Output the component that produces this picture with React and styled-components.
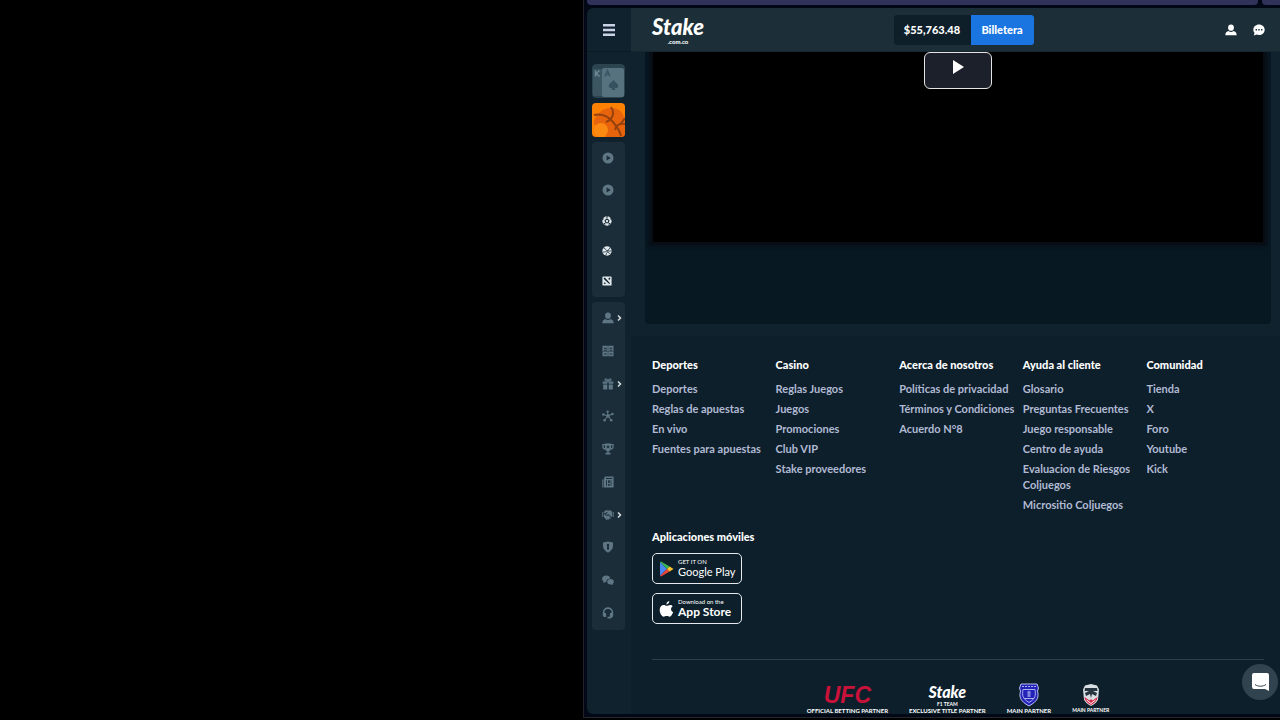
import React from "react";
import styled, { createGlobalStyle, css } from "styled-components";

const GlobalStyle = createGlobalStyle`
  * { box-sizing: border-box; }
  body {
    margin: 0;
    background: #000;
    font-family: Lato, "Liberation Sans", sans-serif;
    font-size: 11px;
    line-height: 16px;
    color: #fff;
  }
  button { font: inherit; color: inherit; border: 0; padding: 0; background: none; cursor: pointer; }
  a { color: inherit; text-decoration: none; }
  ul { list-style: none; margin: 0; padding: 0; }
  svg { display: block; flex: none; }
`;

const Page = styled.div`
  display: grid;
  grid-template-columns: minmax(0, 583fr) minmax(0, 697fr);
  min-height: 100vh;
  padding-bottom: 2px;
`;

const BrowserWindow = styled.div`
  grid-column: 2;
  display: flex;
  flex-direction: column;
  background: #030817;
  border-left: 1px solid #24202a;
  border-bottom: 1px solid #24282c;
  padding: 0 0 3px 3px;
`;

const TabStrip = styled.div`
  display: flex;
  gap: 4px;
  height: 5px;
  margin-bottom: 3px;
`;

const Tab = styled.div`
  flex: ${(p) => (p.$grow ? 1 : "0 0 18px")};
  background: #30325a;
  border-radius: ${(p) => (p.$grow ? "0 0 4px 4px" : "0 0 0 4px")};
`;

const Shell = styled.div`
  flex: 1;
  display: grid;
  grid-template-columns: 44px minmax(0, 1fr);
  background: #10222d;
  border-radius: 6px 0 0 6px;
  overflow: hidden;
`;

const Sidebar = styled.aside`
  display: flex;
  flex-direction: column;
`;

const MenuButton = styled.button`
  height: 44px;
  display: flex;
  align-items: center;
  justify-content: center;
  border-bottom: 1px solid #0c1a25;
`;

const SideBody = styled.div`
  display: flex;
  flex-direction: column;
  gap: 5px;
  padding: 12px 6px 0 5px;
`;

const ModeTile = styled.button`
  height: 34px;
  border-radius: 4px;
  overflow: hidden;
`;

const NavPanel = styled.nav`
  display: flex;
  flex-direction: column;
  padding-bottom: 1px;
  background: #1b2d38;
  border-radius: 4px;
  ${(p) => p.$tall && css`height: 328px;`}
`;

const NavItem = styled.button`
  display: flex;
  align-items: center;
  gap: 3px;
  padding-left: 10px;
  color: ${(p) => (p.$bright ? "#dfe8ec" : "#5f7785")};
  ${(p) => (p.$bright ? css`height: 30px;` : css`flex: 1 0 32px;`)}
`;

const Main = styled.main`
  display: flex;
  flex-direction: column;
`;

const Header = styled.header`
  position: relative;
  z-index: 1;
  height: 44px;
  display: grid;
  grid-template-columns: 1fr auto 1fr;
  align-items: center;
  padding: 0 5px 0 21px;
  background: #1c2e37;
  border-bottom: 1px solid #17262f;
`;

const Brand = styled.a`
  justify-self: start;
  display: flex;
  flex-direction: column;
  font-weight: 900;
  font-style: italic;
  font-size: ${(p) => (p.$small ? "16px" : "22px")};
  line-height: ${(p) => (p.$small ? "18px" : "24px")};
`;

const BrandSuffix = styled.span`
  align-self: center;
  font-style: normal;
  font-weight: ${(p) => (p.$light ? 700 : 900)};
  font-size: ${(p) => (p.$light ? "5px" : "6px")};
  line-height: 6px;
`;

const Wallet = styled.div`
  display: flex;
  height: 30px;
  border-radius: 3px;
  overflow: hidden;
  font-weight: 900;
`;

const Balance = styled.button`
  width: 77px;
  background: #0e1f2a;
`;

const WalletButton = styled.button`
  width: 63px;
  background: #1b75e0;
`;

const HeaderActions = styled.div`
  justify-self: end;
  display: flex;
  align-items: center;
  gap: 16px;
  margin-right: 10px;
`;

const StreamCard = styled.section`
  margin: 0 9px 0 14px;
  padding: 0 8px 82px;
  background: #071822;
  border-radius: 0 0 4px 4px;
`;

const Video = styled.div`
  display: flex;
  justify-content: center;
  align-items: flex-start;
  height: 190px;
  background: #000;
  box-shadow: 0 0 3px 4px #080d15;
`;

const PlayButton = styled.button`
  width: 68px;
  height: 37px;
  padding-bottom: 8px;
  display: flex;
  align-items: center;
  justify-content: center;
  border: 1px solid #e4e4e4;
  border-radius: 6px;
  background: #1c202a;
`;

const Footer = styled.footer`
  flex: 1;
  margin-top: 12px;
  padding: 20px 16px 0 21px;
  background: #0d1f2b;
`;

const Columns = styled.div`
  display: grid;
  grid-template-columns: repeat(5, minmax(0, 1fr));
  gap: 6px;
`;

const Heading = styled.h2`
  margin: 0 0 8px;
  font-size: 11px;
  line-height: 17px;
  font-weight: 900;
`;

const LinkList = styled.ul`
  display: flex;
  flex-direction: column;
  gap: 4px;
  color: #b1bad3;
  font-weight: 700;
`;

const Apps = styled.section`
  display: flex;
  flex-direction: column;
  align-items: flex-start;
  gap: 9px;
  margin-top: 17px;
  padding-bottom: 35px;
  border-bottom: 1px solid #2c3f4a;
`;

const AppsHeading = styled(Heading)`
  margin: 0;
  line-height: 14px;
`;

const StoreLink = styled.a`
  display: flex;
  align-items: center;
  gap: 4px;
  width: 90px;
  height: 31px;
  padding-left: 6px;
  border: 1px solid #e6eaec;
  border-radius: 5px;
`;

const StoreText = styled.span`
  display: flex;
  flex-direction: column;
  font-size: 6px;
  line-height: 7px;
  white-space: nowrap;
`;

const StoreName = styled.span`
  font-weight: ${(p) => (p.$wide ? 700 : 400)};
  font-size: ${(p) => (p.$wide ? "12px" : "11px")};
  line-height: 14px;
`;

const Partners = styled.div`
  display: flex;
  justify-content: center;
  gap: 21px;
  padding-top: 22px;
`;

const Partner = styled.a`
  display: flex;
  flex-direction: column;
  align-items: center;
  font-size: ${(p) => (p.$small ? "5px" : "6px")};
  line-height: 7px;
  font-weight: 700;
  white-space: nowrap;
`;

const PartnerMark = styled.span`
  display: flex;
  flex-direction: column;
  align-items: center;
  justify-content: center;
  height: 25px;
`;

const UfcMark = styled.span`
  color: #c8123a;
  font-family: "Liberation Sans", sans-serif;
  font-weight: 700;
  font-style: italic;
  font-size: 23px;
  line-height: 24px;
`;

const ChatButton = styled.button`
  position: fixed;
  right: 2px;
  bottom: 20px;
  width: 36px;
  height: 36px;
  display: flex;
  align-items: center;
  justify-content: center;
  border-radius: 50%;
  background: #31434e;
`;

const Icon = ({ size = 12, children }) => (
  <svg width={size} height={size} viewBox="0 0 12 12" fill="currentColor" aria-hidden="true">
    {children}
  </svg>
);

const PlayIcon = () => (
  <Icon>
    <path fillRule="evenodd" d="M6 .5a5.500 5.500 0 1 1 0 11 5.500 5.500 0 0 1 0-11ZM4.600 3.400v5.200L8.800 6 4.600 3.400Z" />
  </Icon>
);
const SoccerIcon = () => (
  <Icon size={10}>
    <circle cx="6" cy="6" r="5.600" />
    <path fill="none" stroke="#14242e" strokeWidth="1.300" d="m6 3.600 2.300 1.700-.9 2.700H4.600l-.9-2.700L6 3.600Z" />
    <path fill="#14242e" d="M4.300 1.100 6 2l1.700-.9L6 .3l-1.700.8ZM.6 5.300 1.900 4l-.3-1.500L.5 4.200l.1 1.100ZM11.400 5.300 10.100 4l.3-1.500 1.100 1.700-.1 1.100ZM2 9.800l.2-1.800 1.600.7.400 1.900L2 9.800ZM10 9.800 9.800 8l-1.600.7-.4 1.900L10 9.800Z" />
  </Icon>
);
const BasketIcon = () => (
  <Icon size={10}>
    <circle cx="6" cy="6" r="5.600" />
    <path fill="none" stroke="#14242e" strokeWidth=".9" d="M2 2.300c2 1 5 4 7.500 7.500M1 7.300c3 .5 6-1.300 8.600-5M7 5.500c1.300.6 3 .8 4.300.4M4.600 11.500c.2-2 1.200-3.200 2.300-4.500" />
  </Icon>
);
const SwordsIcon = () => (
  <Icon size={10}>
    <rect x=".5" y=".5" width="11" height="11" rx=".8" />
    <path fill="#14242e" d="M2.200 2.200h1.500l5.900 6.600-.9.900-6.500-6V2.200ZM9.800 2.200v1.400L8.600 4.800 7.600 3.600l.8-1.400h1.400ZM3.400 7.500l1.200 1.100-1.300 1.300-1.200-1.100 1.300-1.300Z" />
  </Icon>
);
const UserIcon = () => (
  <Icon>
    <ellipse cx="6" cy="3.700" rx="2.900" ry="3.100" />
    <path d="M.3 11.200c0-2.600 1.500-3.900 3.200-4.200 1.400 1.200 3.600 1.200 5 0 1.700.3 3.200 1.600 3.200 4.200H.3Z" />
  </Icon>
);
const BetsIcon = () => (
  <Icon>
    <path fillRule="evenodd" d="M.5.8h11v10.400H.5V.8Zm1.400 2v1h3v-1h-3Zm0 2v.9h3v-.9h-3ZM7.600 2.800v1h2.600v-1H7.600Zm0 2v.9h2.600v-.9H7.600ZM2 8.400v1h2.800v-1H2Zm5.600 0v1h2.600v-1H7.600Z" />
    <path fill="#1b2d38" opacity=".6" d="M5.700.8h.7v10.400h-.7zM.5 6.300h11v.6H.5z" />
  </Icon>
);
const GiftIcon = () => (
  <Icon>
    <path d="M.6 3.400h4.700v2.400H.6V3.400Zm6.100 0h4.700v2.400H6.700V3.400ZM1.200 6.500h4.100v5H1.200v-5Zm5.500 0h4.100v5H6.700v-5Z" />
    <path fill="none" stroke="currentColor" strokeWidth="1.200" d="M5.700 3.200C4 3.200 2.700 2.600 3 1.500 3.400.4 5.300.7 6 3 6.700.7 8.600.4 9 1.500c.3 1.100-1 1.700-2.700 1.700" />
  </Icon>
);
const HubIcon = () => (
  <Icon>
    <path stroke="currentColor" strokeWidth="1.100" d="M6 6 5.500 1.500M6 6l4.400-2M6 6l3.200 4M6 6l-3.300 4M6 6 1.500 4.500" />
    <circle cx="6" cy="6" r="1.700" />
    <circle cx="5.600" cy="1.600" r="1.200" />
    <circle cx="10.500" cy="4" r="1.200" />
    <circle cx="9.200" cy="10.200" r="1.300" />
    <circle cx="2.600" cy="10.200" r="1.300" />
    <circle cx="1.400" cy="4.500" r="1.200" />
  </Icon>
);
const TrophyIcon = () => (
  <Icon>
    <path d="M3 .5h6v4.700C9 7 7.700 8 6.700 8.200v1.500h1.800v1.800h-5V9.700h1.800V8.200C4.300 8 3 7 3 5.200V.5Z" />
    <path fill="none" stroke="currentColor" strokeWidth="1.300" d="M3 1.700H1v2c0 1.400 1 2.200 2.300 2.300M9 1.700h2v2c0 1.400-1 2.200-2.300 2.300" />
    <path fill="#1b2d38" d="m6 2 .6 1.200 1.300.1-1 .9.300 1.300L6 4.800l-1.200.7.300-1.300-1-.9 1.300-.1L6 2Z" />
  </Icon>
);
const NewsIcon = () => (
  <Icon>
    <path fillRule="evenodd" d="M2.600.6h9v10.800H1.800V2.200h.8V.6ZM4 2v1h6.300V2H4Zm0 2.200v5.500h.9V4.200H4Zm2.100 0V7h1.600V4.200H6.100Zm2.500 0v5.500h.8V4.200h-.8ZM6.100 8v1.700h1.600V8H6.100ZM.3 3.500h.9v7.900H.3V3.500Z" />
  </Icon>
);
const HandshakeIcon = () => (
  <Icon>
    <path d="M.3 3h.9v5H.3V3Zm10.500 0h.9v5h-.9V3ZM1.900 2.700 4.200 1l2 .7L8 1l2.200 1.700v4.600l-.9.700-3-3-1.600 1-.9-.7 2-2-1-.3-1.600 1.300-1.300-.2v-1.400Z" />
    <path d="m1.900 5.200 1.500.6 1.300 1.300 1.600-.8 2.700 2.600-.8.9-1.400-1 .8 1.300-.8.7-1.500-1.200.4 1.400-1 .2-2.800-3.200V5.200Z" />
  </Icon>
);
const ShieldIcon = () => (
  <Icon>
    <path fillRule="evenodd" d="M1 1.500 6 .4l5 1.100v3.800c0 3-2.600 5-5 6.400-2.400-1.400-5-3.400-5-6.400V1.500Zm5 1.300a1.300 1.300 0 0 0-.8 2.300L4.900 8.400h2.200l-.3-3.300A1.300 1.300 0 0 0 6 2.800Z" />
  </Icon>
);
const ForumIcon = () => (
  <Icon>
    <path d="M4.300 1.500c2.200 0 3.800 1.300 4 3-2.500.1-4 1.500-4 3.300l-1.700.8-1.500.1.400-1.300C.6 6.700.1 5.900.1 5c0-2 1.800-3.500 4.200-3.500Z" />
    <path d="M8.500 5.100c2 0 3.400 1.200 3.400 2.700 0 .8-.4 1.500-1.100 2l.2 1.200-1.400-.6c-2.600.4-4.400-.9-4.400-2.600 0-1.500 1.400-2.700 3.300-2.700Z" />
  </Icon>
);
const SupportIcon = () => (
  <Icon>
    <path fill="none" stroke="currentColor" strokeWidth="1.600" d="M1.600 8V5.500c0-2.700 2-4.400 4.400-4.400s4.400 1.700 4.400 4.400v2.200c0 1.700-1.100 2.900-3.200 2.900" />
    <path d="M1.500 6h2.600v4H2.500c-1 0-1.700-.8-1.700-2L1.500 6Zm9 0H7.900v4h1.600c1 0 1.700-.8 1.700-2l-.7-2ZM5.500 9.700h2.200v1.900H5.500z" />
  </Icon>
);
const Chevron = () => (
  <svg width="5" height="8" viewBox="0 0 5 8" aria-hidden="true">
    <path fill="none" stroke="#d5dde2" strokeWidth="1.500" d="m1 1.500 2.500 2.500L1 6.500" />
  </svg>
);

const CardsArt = () => (
  <svg width="33" height="34" viewBox="0 0 33 34" aria-hidden="true">
    <rect width="33" height="34" rx="4" fill="#2c444f" />
    <path fill="#3b5561" d="M1 5h10v27H1z" />
    <rect x="10" y="4" width="22" height="29" rx="2" fill="#56727f" />
    <path fill="none" stroke="#6d8996" strokeWidth="1.500" d="M3.500 6.500v6M7.500 6.500l-3.300 3 3.500 3" />
    <path fill="none" stroke="#3a5564" strokeWidth="1.500" d="m13 12.500 2.500-6 2.500 6M14 10.500h3" />
    <path fill="#35505f" d="M21.500 16c1.300 2 4.700 3.600 4.700 6 0 2-2.300 2.700-3.700 1.400l.9 2.600h-3.800l.9-2.600c-1.400 1.300-3.700.6-3.700-1.400 0-2.400 3.400-4 4.700-6Z" />
  </svg>
);
const BasketballArt = () => (
  <svg width="33" height="34" viewBox="0 0 33 34" aria-hidden="true">
    <rect width="33" height="34" fill="#fb8105" />
    <path fill="#e8640c" d="M2 18C6 7 17 1 27 7c5 4 6 9 6 13v14H14c0-8-5-13-12-12v-4Z" />
    <circle cx="9" cy="27" r="7" fill="#fa8a12" />
    <g fill="none" stroke="#96420f" strokeWidth="2">
      <path d="M2 12c8-2 14 1 19 7s7 9 8 14" />
      <path d="M19 4c4 6 2 12-5 15" />
      <path d="M33 21c-6-1-9 2-10 6M27 22c3-2 4-4 6-7" />
    </g>
  </svg>
);

const GooglePlayMark = () => (
  <svg width="15" height="16" viewBox="0 0 15 16" aria-hidden="true">
    <path fill="#4a86f0" d="M1 1v14l7-7-7-7Z" />
    <path fill="#35b558" d="m1 1 7 7 2.600-2.600L2 .6 1 1Z" />
    <path fill="#ef4438" d="m1 15 7-7 2.600 2.600L2 15.400 1 15Z" />
    <path fill="#fdc42e" d="M10.600 5.400 8 8l2.600 2.600L14.500 8l-3.900-2.600Z" />
  </svg>
);
const AppleMark = () => (
  <svg width="15" height="16" viewBox="0 0 15 16" fill="#fff" aria-hidden="true">
    <path d="M10.300 0c.2 1.700-1.200 3.400-2.900 3.400C7.200 1.800 8.700.2 10.300 0Z" />
    <path d="M13.600 5.400c-2.300 1.400-2 4.700.6 5.700-.7 2.100-2 4.600-3.500 4.600-1.200 0-1.600-.7-3-.7s-1.900.7-3 .7C2.700 15.700.7 12 .7 9c0-3.200 2-5 4-5 1.300 0 2.200.8 3.100.8.900 0 2-.9 3.500-.8 1 0 1.800.5 2.300 1.400Z" />
  </svg>
);
const EvertonCrest = () => (
  <svg width="22" height="24" viewBox="0 0 22 24" aria-hidden="true">
    <path fill="#2423b8" stroke="#b8bdf0" d="M3 1h16l1.500 4-1 3c1.500 6 .5 10-8.500 15C2 18 1 14 2.500 8l-1-3L3 1Z" />
    <path fill="none" stroke="#a9b0ee" strokeDasharray="2 1" d="M4 3.500h14" />
    <path fill="none" stroke="#a9b0ee" d="M5 6.500c-1 6-.5 9 6 13 6.500-4 7-7 6-13H5ZM6 15.500h10" />
    <path fill="#7f86e0" d="M9.500 14v-4l-.5-1 2-1.500L13 9l-.5 1v4h-3Z" />
  </svg>
);
const ClubCrest = () => (
  <svg width="18" height="24" viewBox="0 0 18 24" aria-hidden="true">
    <path fill="#d9dee2" d="M3 2.500 9 1l6 1.500 2 4-1 10c-1 3-4 5-7 6.500-3-1.500-6-3.500-7-6.500L1 6.500l2-4Z" />
    <path fill="#26343f" d="M3 5h12l.5 3H11l4 2-1 3-4-2-1 4-1-4-4 2-1-3 4-2H2.500L3 5Z" />
    <path fill="#d32a49" d="m2.500 14 5 3.500L9 16l1.500 1.500 5-3.500c-.4 4-3 6-6.500 8-3.500-2-6.100-4-6.500-8Z" />
    <path fill="none" stroke="#f4f6f7" d="M4.500 17 9 20.500l4.500-3.500" />
  </svg>
);

const FOOTER_COLUMNS = [
  ["Deportes", ["Deportes", "Reglas de apuestas", "En vivo", "Fuentes para apuestas"]],
  ["Casino", ["Reglas Juegos", "Juegos", "Promociones", "Club VIP", "Stake proveedores"]],
  ["Acerca de nosotros", ["Políticas de privacidad", "Términos y Condiciones", "Acuerdo N°8"]],
  ["Ayuda al cliente", ["Glosario", "Preguntas Frecuentes", "Juego responsable", "Centro de ayuda", "Evaluacion de Riesgos Coljuegos", "Micrositio Coljuegos"]],
  ["Comunidad", ["Tienda", "X", "Foro", "Youtube", "Kick"]],
];

const QUICK_NAV = [
  ["Reciente", PlayIcon, false],
  ["En directo", PlayIcon, false],
  ["Fútbol", SoccerIcon, true],
  ["Baloncesto", BasketIcon, true],
  ["Esports", SwordsIcon, true],
];

const MAIN_NAV = [
  ["Perfil", UserIcon, true],
  ["Apuestas", BetsIcon, false],
  ["Promociones", GiftIcon, true],
  ["Afiliado", HubIcon, false],
  ["Club VIP", TrophyIcon, false],
  ["Blog", NewsIcon, false],
  ["Patrocinios", HandshakeIcon, true],
  ["Juego responsable", ShieldIcon, false],
  ["Foro", ForumIcon, false],
  ["Soporte", SupportIcon, false],
];

export default function App() {
  return (
    <>
      <GlobalStyle />
      <Page>
        <BrowserWindow>
          <TabStrip>
            <Tab $grow />
            <Tab />
          </TabStrip>
          <Shell>
            <Sidebar>
              <MenuButton aria-label="Menú">
                <svg width="12" height="12" viewBox="0 0 12 12" fill="#c9d2e6">
                  <path d="M0 0h12v2.500H0zM0 4.750h12v2.500H0zM0 9.500h12V12H0z" />
                </svg>
              </MenuButton>
              <SideBody>
                <ModeTile aria-label="Casino"><CardsArt /></ModeTile>
                <ModeTile aria-label="Deportes"><BasketballArt /></ModeTile>
                <NavPanel>
                  {QUICK_NAV.map(([label, Glyph, bright]) => (
                    <NavItem key={label} aria-label={label} $bright={bright}><Glyph /></NavItem>
                  ))}
                </NavPanel>
                <NavPanel $tall>
                  {MAIN_NAV.map(([label, Glyph, expandable]) => (
                    <NavItem key={label} aria-label={label}>
                      <Glyph />
                      {expandable && <Chevron />}
                    </NavItem>
                  ))}
                </NavPanel>
              </SideBody>
            </Sidebar>
            <Main>
              <Header>
                <Brand href="#">
                  Stake
                  <BrandSuffix>.com.co</BrandSuffix>
                </Brand>
                <Wallet>
                  <Balance>$55,763.48</Balance>
                  <WalletButton>Billetera</WalletButton>
                </Wallet>
                <HeaderActions>
                  <button aria-label="Cuenta"><UserIcon /></button>
                  <button aria-label="Chat">
                    <Icon>
                      <path fillRule="evenodd" d="M6 .4c3.200 0 5.700 2.300 5.700 5.300S9.200 11.100 6 11.100c-.9 0-1.700-.2-2.400-.5L.8 11.500l.7-2.500C.7 8.100.3 7 .3 5.700.3 2.700 2.800.4 6 .4ZM2.600 5v1.400H4V5H2.600Zm2.700 0v1.400h1.400V5H5.300ZM8 5v1.400h1.400V5H8Z" />
                    </Icon>
                  </button>
                </HeaderActions>
              </Header>
              <StreamCard>
                <Video>
                  <PlayButton aria-label="Reproducir">
                    <svg width="11" height="14" viewBox="0 0 11 14" fill="#fff"><path d="M0 0v14l11-7z" /></svg>
                  </PlayButton>
                </Video>
              </StreamCard>
              <Footer>
                <Columns>
                  {FOOTER_COLUMNS.map(([title, links]) => (
                    <section key={title}>
                      <Heading>{title}</Heading>
                      <LinkList>
                        {links.map((link) => (
                          <li key={link}><a href="#">{link}</a></li>
                        ))}
                      </LinkList>
                    </section>
                  ))}
                </Columns>
                <Apps>
                  <AppsHeading>Aplicaciones móviles</AppsHeading>
                  <StoreLink href="#">
                    <GooglePlayMark />
                    <StoreText>GET IT ON<StoreName>Google Play</StoreName></StoreText>
                  </StoreLink>
                  <StoreLink href="#">
                    <AppleMark />
                    <StoreText>Download on the<StoreName $wide>App Store</StoreName></StoreText>
                  </StoreLink>
                </Apps>
                <Partners>
                  <Partner href="#">
                    <PartnerMark><UfcMark>UFC</UfcMark></PartnerMark>
                    OFFICIAL BETTING PARTNER
                  </Partner>
                  <Partner href="#">
                    <PartnerMark>
                      <Brand as="span" $small>Stake</Brand>
                      <BrandSuffix $light>F1 TEAM</BrandSuffix>
                    </PartnerMark>
                    EXCLUSIVE TITLE PARTNER
                  </Partner>
                  <Partner href="#">
                    <PartnerMark><EvertonCrest /></PartnerMark>
                    MAIN PARTNER
                  </Partner>
                  <Partner href="#" $small>
                    <PartnerMark><ClubCrest /></PartnerMark>
                    MAIN PARTNER
                  </Partner>
                </Partners>
              </Footer>
            </Main>
          </Shell>
        </BrowserWindow>
      </Page>
      <ChatButton aria-label="Abrir chat">
        <svg width="17" height="18" viewBox="0 0 17 18" aria-hidden="true">
          <path fill="#fff" d="M2 0h13a2 2 0 0 1 2 2v16l-4-2H2a2 2 0 0 1-2-2V2a2 2 0 0 1 2-2Z" />
          <path fill="none" stroke="#31434e" d="M3 11.500c3 2.300 8 2.300 11 0" />
        </svg>
      </ChatButton>
    </>
  );
}
